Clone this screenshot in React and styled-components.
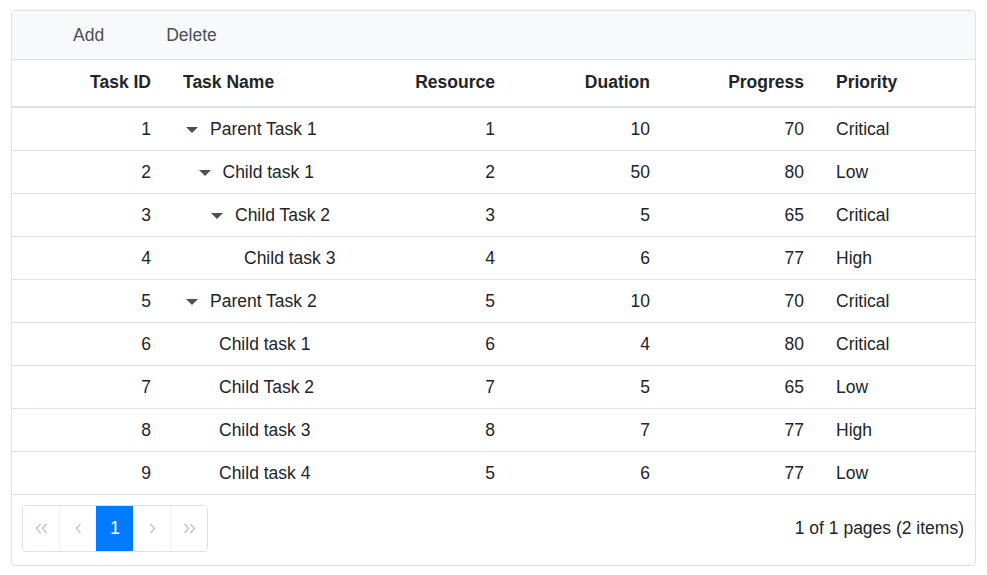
import React from 'react'
import styled, { createGlobalStyle } from 'styled-components';

const GlobalStyle = createGlobalStyle`
  body {
    margin: 0;
    font-family: "Liberation Sans", Arial, sans-serif;
    background: #fff;
    color: #212529;
  }
`;

const columns = [
  { key: 'id', title: 'Task ID', align: 'right' },
  { key: 'name', title: 'Task Name', align: 'left' },
  { key: 'resource', title: 'Resource', align: 'right' },
  { key: 'duration', title: 'Duation', align: 'right' },
  { key: 'progress', title: 'Progress', align: 'right' },
  { key: 'priority', title: 'Priority', align: 'left' },
];

const rows = [
  { id: 1, name: 'Parent Task 1', level: 0, expand: true, resource: 1, duration: 10, progress: 70, priority: 'Critical' },
  { id: 2, name: 'Child task 1', level: 1, expand: true, resource: 2, duration: 50, progress: 80, priority: 'Low' },
  { id: 3, name: 'Child Task 2', level: 2, expand: true, resource: 3, duration: 5, progress: 65, priority: 'Critical' },
  { id: 4, name: 'Child task 3', level: 3, expand: false, resource: 4, duration: 6, progress: 77, priority: 'High' },
  { id: 5, name: 'Parent Task 2', level: 0, expand: true, resource: 5, duration: 10, progress: 70, priority: 'Critical' },
  { id: 6, name: 'Child task 1', level: 1, expand: false, resource: 6, duration: 4, progress: 80, priority: 'Critical' },
  { id: 7, name: 'Child Task 2', level: 1, expand: false, resource: 7, duration: 5, progress: 65, priority: 'Low' },
  { id: 8, name: 'Child task 3', level: 1, expand: false, resource: 8, duration: 7, progress: 77, priority: 'High' },
  { id: 9, name: 'Child task 4', level: 1, expand: false, resource: 5, duration: 6, progress: 77, priority: 'Low' },
];

const Chevron = ({ double, dir }) => (
  <svg width={double ? 13 : 7} height="11" viewBox={double ? '0 0 13 11' : '0 0 7 11'}>
    <g fill="none" stroke="#c4c4c4" strokeWidth="1.4" transform={dir === 'left' ? '' : `translate(${double ? 13 : 7},0) scale(-1,1)`}>
      <path d="M5.5 1 L1.5 5.5 L5.5 10" />
      {double && <path d="M11.5 1 L7.5 5.5 L11.5 10" />}
    </g>
  </svg>
);

const App = () => {
  return (
    <Page>
      <GlobalStyle />
      <Grid>
        <Toolbar>
          <ToolButton>Add</ToolButton>
          <ToolButton>Delete</ToolButton>
        </Toolbar>
        <HeaderRow>
          {columns.map(c => (
            <HeadCell key={c.key} $align={c.align}>{c.title}</HeadCell>
          ))}
        </HeaderRow>
        {rows.map((r, i) => (
          <Row key={r.id} $first={i === 0}>
            <Cell $align="right">{r.id}</Cell>
            <Cell $align="left">
              <Indent style={{ width: r.level * 12.5 }} />
              {r.expand ? <Caret><CaretShape /></Caret> : <Spacer />}
              {r.name}
            </Cell>
            <Cell $align="right">{r.resource}</Cell>
            <Cell $align="right">{r.duration}</Cell>
            <Cell $align="right">{r.progress}</Cell>
            <Cell $align="left">{r.priority}</Cell>
          </Row>
        ))}
        <Footer>
          <Pager>
            <PageButton><Chevron double dir="left" /></PageButton>
            <PageButton><Chevron dir="left" /></PageButton>
            <PageButton $active>1</PageButton>
            <PageButton><Chevron dir="right" /></PageButton>
            <PageButton><Chevron double dir="right" /></PageButton>
          </Pager>
          <PageInfo>1 of 1 pages (2 items)</PageInfo>
        </Footer>
      </Grid>
    </Page>
  )
}

export default App

const Page = styled.div`
  padding: 10px 11px 0 11px;
`;

const Grid = styled.div`
  border: 1px solid #dee2e6;
  border-radius: 4px;
  overflow: hidden;
  font-size: 17.5px;
`;

const Toolbar = styled.div`
  display: flex;
  align-items: center;
  height: 48px;
  padding-left: 30px;
  background: #f8f9fa;
  border-bottom: 1px solid #dee2e6;
`;

const ToolButton = styled.button`
  border: none;
  background: transparent;
  font-family: inherit;
  font-size: 17.5px;
  color: #495057;
  padding: 0 31px;
  height: 100%;
  cursor: pointer;
`;

const gridCols = '155px 189px 155px 155px 154px 1fr';

const HeaderRow = styled.div`
  display: grid;
  grid-template-columns: ${gridCols};
  height: 46px;
  border-bottom: 2px solid #dee2e6;
`;

const HeadCell = styled.div`
  display: flex;
  align-items: center;
  justify-content: ${p => (p.$align === 'right' ? 'flex-end' : 'flex-start')};
  padding: 0 16px 2px;
  font-weight: bold;
  color: #212529;
`;

const Row = styled.div`
  display: grid;
  grid-template-columns: ${gridCols};
  height: 42px;
  border-top: ${p => (p.$first ? 'none' : '1px solid #dee2e6')};
`;

const Cell = styled.div`
  display: flex;
  align-items: center;
  justify-content: ${p => (p.$align === 'right' ? 'flex-end' : 'flex-start')};
  padding: 0 16px;
  color: #212529;
  white-space: nowrap;
`;

const Indent = styled.span`
  display: inline-block;
  flex-shrink: 0;
`;

const Caret = styled.span`
  display: inline-flex;
  align-items: center;
  width: 27px;
  height: 16px;
  flex-shrink: 0;
  padding-left: 3px;
  box-sizing: border-box;
`;

const CaretShape = styled.span`
  width: 0;
  height: 0;
  border-left: 6px solid transparent;
  border-right: 6px solid transparent;
  border-top: 6px solid #495057;
  margin-top: 2px;
`;

const Spacer = styled.span`
  display: inline-block;
  width: 23.5px;
  flex-shrink: 0;
`;

const Footer = styled.div`
  display: flex;
  align-items: center;
  justify-content: space-between;
  height: 66px;
  padding: 0 11px 4px 10px;
  border-top: 1px solid #dee2e6;
`;

const Pager = styled.div`
  display: flex;
  border: 1px solid #dee2e6;
  border-radius: 4px;
  overflow: hidden;
  height: 45px;
`;

const PageButton = styled.div`
  width: 36px;
  display: flex;
  align-items: center;
  justify-content: center;
  font-size: 18px;
  color: #fff;
  background: ${p => (p.$active ? '#007bff' : '#fff')};
  border-left: 1px solid ${p => (p.$active ? '#007bff' : '#f1f1f1')};
  &:first-child {
    border-left: none;
  }
`;

const PageInfo = styled.div`
  color: #212529;
  font-size: 17.5px;
`;
